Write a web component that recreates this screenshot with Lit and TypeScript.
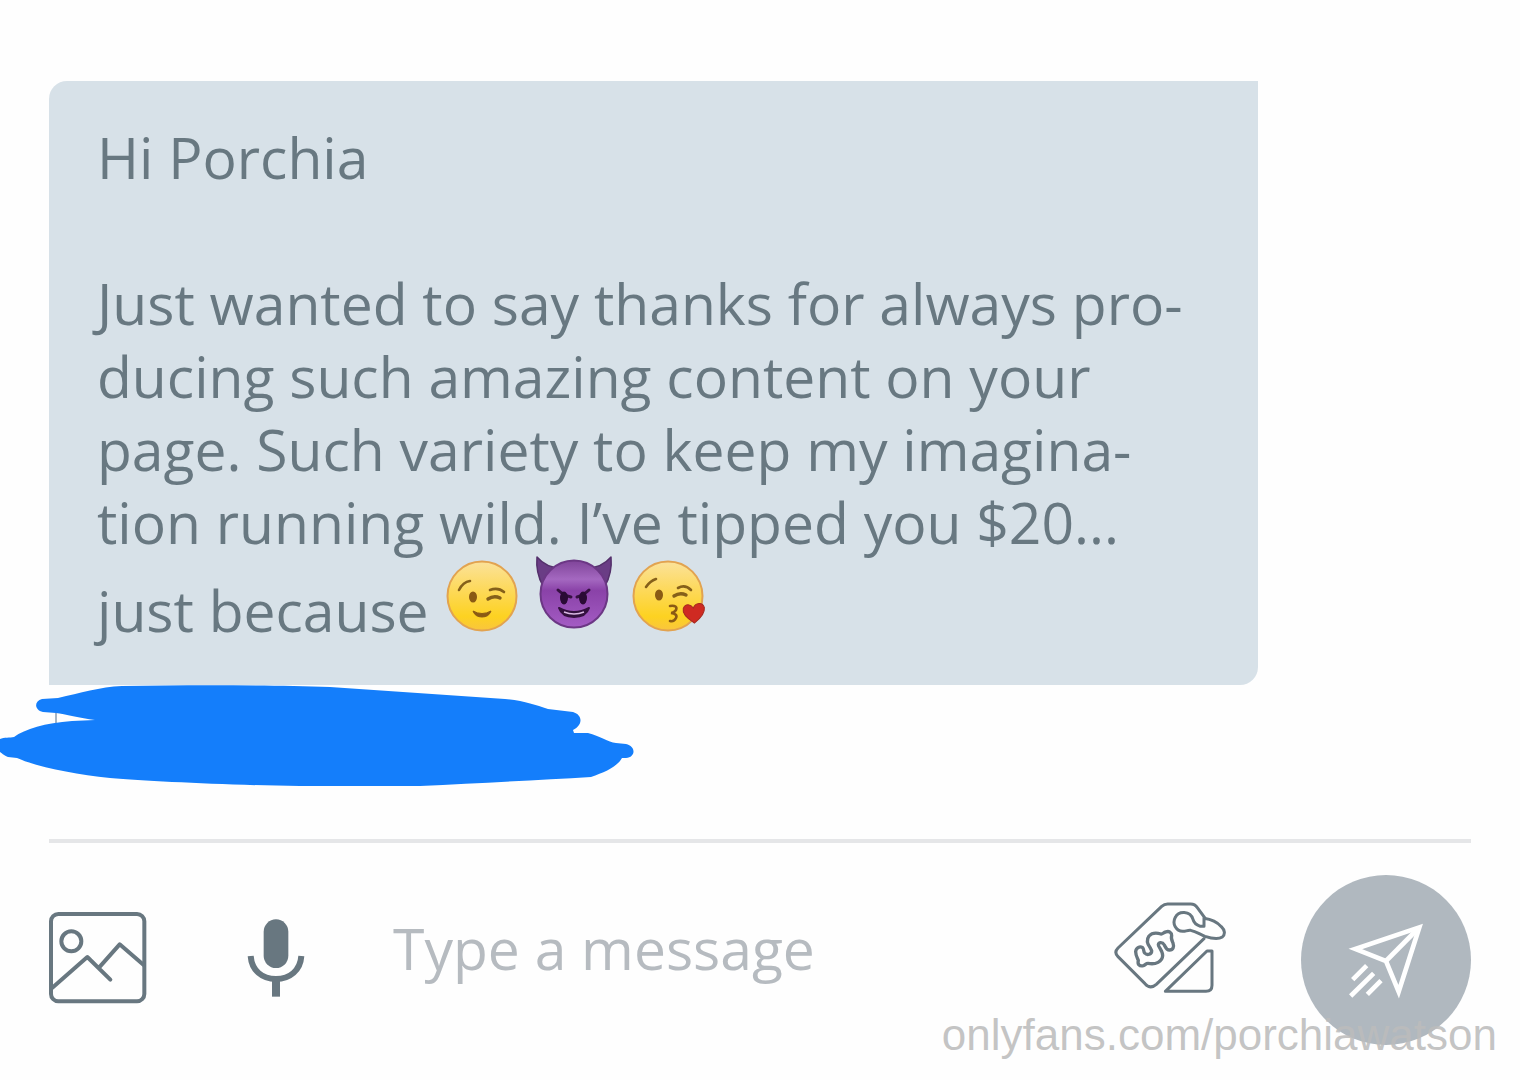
import { LitElement, html, css, svg } from "lit";
import { customElement, state } from "lit/decorators.js";

const face = svg`
  <circle cx="39" cy="40" r="34.5" fill="url(#skin)" stroke="#e2a350" stroke-width="2"></circle>
`;

const skin = svg`
  <defs>
    <linearGradient id="skin" x1="0" y1="0" x2="0" y2="1">
      <stop offset="0" stop-color="#fbe29a"></stop>
      <stop offset="0.4" stop-color="#fdd95c"></stop>
      <stop offset="0.8" stop-color="#fdd221"></stop>
      <stop offset="1" stop-color="#f9c53e"></stop>
    </linearGradient>
    <linearGradient id="violet" x1="0" y1="0" x2="0" y2="1">
      <stop offset="0" stop-color="#7f4499"></stop>
      <stop offset="0.28" stop-color="#a468c0"></stop>
      <stop offset="0.45" stop-color="#8a42a8"></stop>
      <stop offset="1" stop-color="#a45cc4"></stop>
    </linearGradient>
  </defs>
`;

@customElement("emoji-glyph")
class EmojiGlyph extends LitElement {
  static properties = { name: { type: String } };
  declare name: string;

  static styles = css`
    :host {
      display: inline-block;
      width: 78px;
      height: 78px;
      margin-top: -3px;
      vertical-align: -2px;
    }
    .glyph {
      display: block;
      width: 100%;
      height: 100%;
      overflow: visible;
    }
  `;

  private drawing() {
    if (this.name === "smiling devil") {
      return svg`
        <path d="M1 1 C0 12 2 21 7 30 L25 12 C15 12 7 8 1 1Z M75 1 C76 12 74 21 69 30 L51 12 C61 12 69 8 75 1Z" fill="#6a3d85" stroke="#54306b" stroke-width="1.5" stroke-linejoin="round"></path>
        <circle cx="38" cy="38" r="33.5" fill="url(#violet)" stroke="#6c3785" stroke-width="2"></circle>
        <path d="M22 34 Q27 39 35 41 M53 34 Q48 39 41 41" fill="none" stroke="#351141" stroke-width="3" stroke-linecap="round"></path>
        <ellipse cx="28" cy="42" rx="4" ry="6.5" fill="#2a0b35"></ellipse>
        <ellipse cx="47" cy="42" rx="4" ry="6.5" fill="#2a0b35"></ellipse>
        <path d="M23 52 Q38 60 53 52 Q50 61 38 61 Q26 61 23 52Z" fill="#33113f" stroke="#33113f" stroke-width="2" stroke-linejoin="round"></path>
        <path d="M28 56 Q38 60 48 56" fill="none" stroke="#d9b8e4" stroke-width="1.5"></path>
      `;
    }
    if (this.name === "blowing a kiss") {
      return svg`
        ${face}
        <path d="M17 31 Q21 25 27 23 M49 32 Q56 28 62 34" fill="none" stroke="#85601a" stroke-width="2.6" stroke-linecap="round"></path>
        <ellipse cx="30" cy="39" rx="4" ry="5.5" fill="#8a5a14"></ellipse>
        <path d="M45 40 Q51 36 57 39" fill="none" stroke="#85601a" stroke-width="3.4" stroke-linecap="round"></path>
        <path d="M41 50 Q49 49 47 54 Q45 57 42 57 Q49 58 47 62 Q45 66 41 65" fill="none" stroke="#8a5a14" stroke-width="2.6" stroke-linecap="round"></path>
        <path d="M64 67 C58 62 53 56 55 51 C58 46 63 48 65 52 C68 47 75 47 76 53 C76 58 71 63 64 67Z" fill="#cf2a22" stroke="#a52a20" transform="rotate(-8 65 57)"></path>
      `;
    }
    return svg`
      ${face}
      <path d="M16 34 Q20 26 27 25 M47 34 Q55 31 61 36" fill="none" stroke="#85601a" stroke-width="2.6" stroke-linecap="round"></path>
      <ellipse cx="30" cy="41" rx="4" ry="5.5" fill="#8a5a14"></ellipse>
      <path d="M45 43 Q51 39 57 42" fill="none" stroke="#85601a" stroke-width="3.4" stroke-linecap="round"></path>
      <path d="M30 55 Q39 60 48 55 Q46 61 39 61 Q32 61 30 55Z" fill="#8a5a14" stroke="#8a5a14" stroke-linejoin="round"></path>
    `;
  }

  render() {
    return html`<svg class="glyph" viewBox="0 0 78 78" role="img" aria-label=${this.name}>${skin}${this.drawing()}</svg>`;
  }
}

@customElement("message-bubble")
class MessageBubble extends LitElement {
  static styles = css`
    :host {
      display: block;
      box-sizing: border-box;
      width: 85%;
      padding: 40px 64px 38px 48px;
      border-radius: 18px 0;
      background: #d7e1e8;
      color: #687881;
      font-size: 57px;
      line-height: 73px;
    }
    .line {
      margin: 0 0 73px;
    }
    .line:last-child {
      margin-bottom: 0;
    }
  `;

  render() {
    return html`
      <p class="line">Hi Porchia</p>
      <p class="line">Just wanted to say thanks for always pro&shy;ducing such amazing content on your page. Such variety to keep my imagina&shy;tion running wild. I’ve tipped you $20... just because <emoji-glyph name="winking"></emoji-glyph> <emoji-glyph name="smiling devil"></emoji-glyph> <emoji-glyph name="blowing a kiss"></emoji-glyph></p>
    `;
  }
}

@customElement("message-composer")
class MessageComposer extends LitElement {
  @state() private draft = "";

  static styles = css`
    :host {
      display: flex;
      align-items: center;
      padding-top: 32px;
      border-top: 4px solid #e5e6e8;
    }
    .tool,
    .send {
      display: flex;
      flex: none;
      align-items: center;
      justify-content: center;
      padding: 0;
      border: 0;
      background: none;
      color: #687780;
      cursor: pointer;
    }
    .tool svg,
    .send svg {
      display: block;
      fill: none;
      stroke: currentColor;
    }
    .tool {
      margin-bottom: 4px;
    }
    .mic {
      margin-left: 100px;
    }
    .field {
      flex: 1;
      min-width: 0;
      height: 76px;
      margin: 0 24px 24px 88px;
      padding: 0;
      border: 0;
      outline: 0;
      background: none;
      color: #687881;
      font: inherit;
      font-size: 57px;
    }
    .field::placeholder {
      color: #b6bbc0;
      opacity: 1;
    }
    .tip {
      margin-bottom: 24px;
    }
    .send {
      width: 170px;
      height: 170px;
      margin-left: 75px;
      border-radius: 50%;
      background: #b0b8bf;
      color: #fff;
    }
  `;

  render() {
    return html`
      <button class="tool" type="button" aria-label="Add image">
        <svg width="98" height="92" viewBox="56 65 294 276" stroke-width="12" stroke-linecap="round" stroke-linejoin="round">
          <rect x="62" y="71" width="280" height="262" rx="22"></rect>
          <circle cx="123" cy="153" r="30"></circle>
          <path d="M66 292 L171 200 L240 268 M206 232 L268 162 L340 224"></path>
        </svg>
      </button>
      <button class="tool mic" type="button" aria-label="Record voice">
        <svg width="58" height="78" viewBox="650 88 174 234">
          <rect x="700" y="89" width="74" height="146" rx="37" fill="currentColor" stroke="none"></rect>
          <path d="M661 199 C664 242 695 268 737 268 C779 268 810 242 813 199" stroke-width="18"></path>
          <path d="M737 268 V321" stroke-width="24"></path>
        </svg>
      </button>
      <input
        class="field"
        type="text"
        aria-label="Message"
        placeholder="Type a message"
        .value=${this.draft}
        @input=${(e: Event) => (this.draft = (e.target as HTMLInputElement).value)}
      />
      <button class="tool tip" type="button" aria-label="Send a tip">
        <svg width="112" height="92" viewBox="44 65 336 276" stroke-width="9" stroke-linejoin="round" stroke-linecap="round">
          <path d="M316 112 L294 82 Q287 71 274 71 H205 Q195 71 187 78 L56 203 Q43 216 56 229 L137 310 Q153 328 171 312 L314 175"></path>
          <path d="M314 114 V138 H303 C292 134 284 130 281 117 C273 90 237 91 228 111 C217 131 231 152 250 153 C258 154 264 149 274 150 C290 154 302 162 317 168 C335 174 358 177 369 170 C379 161 376 149 366 139 C354 126 334 117 314 114 Z"></path>
          <path d="M198 333 L323 212 H338 V315 Q338 333 320 333 Z"></path>
          <path stroke-width="10" d="M153 203 C143 190 141 178 149 167 C158 157 172 157 185 161 C190 162 192 156 199 155 C209 151 217 156 217 166 C214 174 217 179 221 188 C225 200 221 209 211 209 C202 210 199 202 195 194 C189 184 178 186 177 193 C177 200 190 211 190 226 C189 244 169 254 146 249 C141 248 138 254 132 256 C120 259 114 252 117 240 C114 233 109 225 109 214 C110 201 122 197 130 202 C134 206 132 214 136 218 C144 227 158 221 157 211 Z"></path>
        </svg>
      </button>
      <button class="send" type="button" aria-label="Send message">
        <svg width="170" height="170" viewBox="33 45 510 510" stroke-width="14" stroke-linecap="butt" stroke-linejoin="miter">
          <path d="M196 267 L388 202 L326 395 L288 303 Z"></path>
          <path d="M288 303 L386 204"></path>
          <path d="M188 359 L230 317 M182 408 L251 340 M232 403 L273 362"></path>
        </svg>
      </button>
    `;
  }
}

@customElement("app-root")
class AppRoot extends LitElement {
  static styles = css`
    :host {
      display: block;
      position: relative;
      box-sizing: border-box;
      min-height: 100vh;
      padding: 81px 49px 35px;
      background: #fefefe;
      font-family: "Open Sans", "Noto Sans", sans-serif;
    }
    .meta {
      height: 154px;
      margin-left: -49px;
    }
    .scribble {
      display: block;
      overflow: visible;
    }
    .watermark {
      position: absolute;
      right: 23px;
      bottom: 20px;
      color: rgba(188, 188, 188, 0.88);
      font-family: "Liberation Sans", sans-serif;
      font-size: 44px;
      line-height: 50px;
      text-decoration: none;
    }
  `;

  render() {
    return html`
      <message-bubble></message-bubble>
      <div class="meta">
        <svg class="scribble" width="640" height="104" viewBox="0 685 640 104" aria-hidden="true">
          <path d="M56 712 V724" stroke="#a5b4c4" stroke-width="2"></path>
          <path
            fill="#147efb"
            d="M42 699 L58 698 C80 693 100 687 122 686 C190 685 270 685 330 687 L505 699 C525 701 535 705 548 709 L573 712 C583 715 583 725 573 730 L574 733 H588 C600 736 608 742 616 743 L626 744 C636 746 636 757 626 758 H622 C617 767 605 772 591 777 C540 780 480 783 420 786 H300 C220 785 150 781 110 778 C75 774 40 768 17 758 L8 757 C3 755 2 753 0 752 V739 C4 737 10 738 14 737 C25 729 45 723 72 721 L95 720 C80 718 65 714 56 713 L43 712 C34 710 34 701 42 699 Z"
          ></path>
        </svg>
      </div>
      <message-composer></message-composer>
      <a class="watermark" href="#profile">onlyfans.com/porchiawatson</a>
    `;
  }
}
